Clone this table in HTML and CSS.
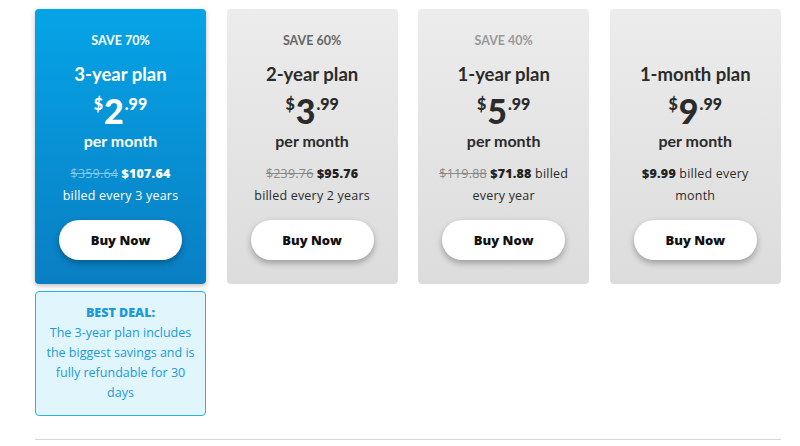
FILE: index.html
```html
<!DOCTYPE html>
<html>
<head>
<meta charset="utf-8">
<link rel="stylesheet" href="styles.css">
</head>
<body>
<div class="wrap">
  <div class="plans">
    <div class="col">
      <div class="card card-blue">
        <div class="save">SAVE 70%</div>
        <div class="name">3-year plan</div>
        <div class="price"><span class="cur">$</span><span class="big">2</span><span class="cents">.99</span></div>
        <div class="per">per month</div>
        <div class="billed"><s>$359.64</s> <b>$107.64</b><br>billed every 3 years</div>
        <button class="buy">Buy Now</button>
      </div>
      <div class="deal">
        <div class="deal-title">BEST DEAL:</div>
        The 3-year plan includes the biggest savings and is fully refundable for 30 days
      </div>
    </div>
    <div class="col">
      <div class="card">
        <div class="save save-60">SAVE 60%</div>
        <div class="name">2-year plan</div>
        <div class="price"><span class="cur">$</span><span class="big">3</span><span class="cents">.99</span></div>
        <div class="per">per month</div>
        <div class="billed"><s>$239.76</s> <b>$95.76</b><br>billed every 2 years</div>
        <button class="buy">Buy Now</button>
      </div>
    </div>
    <div class="col">
      <div class="card">
        <div class="save save-40">SAVE 40%</div>
        <div class="name">1-year plan</div>
        <div class="price"><span class="cur">$</span><span class="big">5</span><span class="cents">.99</span></div>
        <div class="per">per month</div>
        <div class="billed"><s>$119.88</s> <b>$71.88</b> billed every year</div>
        <button class="buy">Buy Now</button>
      </div>
    </div>
    <div class="col">
      <div class="card">
        <div class="save save-none">&nbsp;</div>
        <div class="name">1-month plan</div>
        <div class="price"><span class="cur">$</span><span class="big">9</span><span class="cents">.99</span></div>
        <div class="per">per month</div>
        <div class="billed"><b>$9.99</b> billed every month</div>
        <button class="buy">Buy Now</button>
      </div>
    </div>
  </div>
  <hr class="rule">
</div>
</body>
</html>
```
FILE: styles.css
```css
* { box-sizing: border-box; }
html, body { margin: 0; padding: 0; background: #fff; }
body { font-family: "Open Sans", "Liberation Sans", sans-serif; color: #333; }
.wrap { width: 746px; margin-left: 35px; padding-top: 9px; }
.plans { display: grid; grid-template-columns: repeat(4, 171px); column-gap: 20.6px; align-items: start; }
.col { display: flex; flex-direction: column; gap: 7px; }
.card {
  height: 275px;
  border-radius: 4px;
  background: linear-gradient(180deg, #ececec 0%, #dcdcdc 100%);
  display: flex; flex-direction: column; align-items: center;
  text-align: center;
  padding-top: 24px;
  color: #2b2b2b;
}
.card-blue {
  background: linear-gradient(180deg, #05a4e6 0%, #0a7ec3 100%);
  color: #fff;
  box-shadow: 0 2px 5px rgba(0,0,0,0.25);
}
.save { font-family: Lato, sans-serif; font-weight: 700; font-size: 12.5px; line-height: 16px; height: 16px; }
.save-60 { color: #666; }
.save-40 { color: #999; }
.name { font-family: Lato, sans-serif; font-weight: 700; font-size: 18.5px; line-height: 22px; margin-top: 14px; }
.price { font-family: Lato, sans-serif; font-weight: 900; margin-top: 8px; height: 34px; line-height: 34px; display: flex; align-items: flex-start; }
.cur, .cents { font-size: 16px; line-height: 22px; }
.big { font-size: 34px; line-height: 36px; margin: 0 1px; }
.per { font-family: Lato, sans-serif; font-weight: 700; font-size: 16px; line-height: 20px; margin-top: 4px; }
.billed { font-size: 12.5px; line-height: 22px; margin-top: 12px; padding: 0 14px; letter-spacing: 0.2px; }
.billed b { font-weight: 800; color: #222; }
.card-blue .billed b { color: #fff; }
.billed s { color: #888; }
.card-blue .billed s { color: #7fc9ee; }
.buy {
  margin-top: auto; margin-bottom: 24px;
  width: 123px; height: 40px; border: none; border-radius: 20px;
  background: #fff; color: #111;
  font-family: "Open Sans", sans-serif; font-weight: 800; font-size: 13px;
  box-shadow: 0 3px 6px rgba(0,0,0,0.3);
}
.deal {
  height: 125px;
  border: 1px solid #2ab0e8;
  border-radius: 4px;
  background: #e1f5fc;
  color: #1b9ad9;
  text-align: center;
  font-size: 12.5px; line-height: 20px;
  padding: 11px 5px;
}
.deal-title { font-weight: 800; }
.rule { margin: 23px 0 0 0; border: none; border-top: 1px solid #d6d6d6; height: 0; }
```
